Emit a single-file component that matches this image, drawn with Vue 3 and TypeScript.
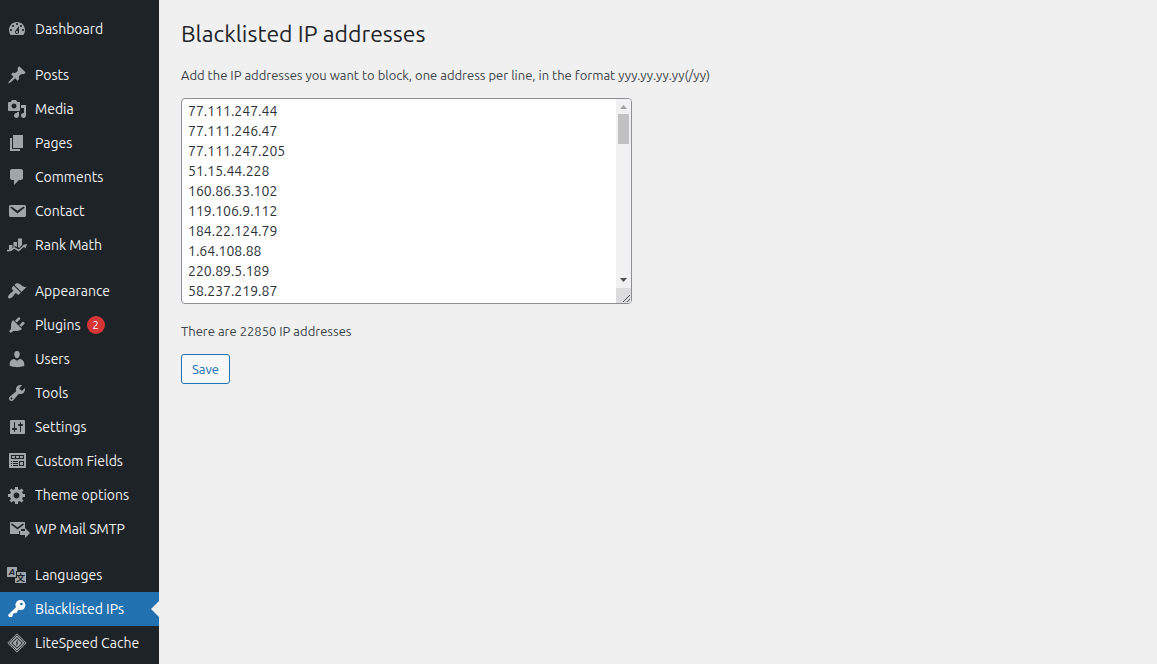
<script setup lang="ts">
import { ref } from 'vue'

interface MenuItem {
  label: string
  icon: string
  badge?: number
  active?: boolean
}

const groups: MenuItem[][] = [
  [{ label: 'Dashboard', icon: 'dashboard' }],
  [
    { label: 'Posts', icon: 'post' },
    { label: 'Media', icon: 'media' },
    { label: 'Pages', icon: 'page' },
    { label: 'Comments', icon: 'comments' },
    { label: 'Contact', icon: 'email' },
    { label: 'Rank Math', icon: 'rank' },
  ],
  [
    { label: 'Appearance', icon: 'appearance' },
    { label: 'Plugins', icon: 'plugins', badge: 2 },
    { label: 'Users', icon: 'users' },
    { label: 'Tools', icon: 'tools' },
    { label: 'Settings', icon: 'settings' },
    { label: 'Custom Fields', icon: 'fields' },
    { label: 'Theme options', icon: 'generic' },
    { label: 'WP Mail SMTP', icon: 'smtp' },
  ],
  [
    { label: 'Languages', icon: 'languages' },
    { label: 'Blacklisted IPs', icon: 'key', active: true },
    { label: 'LiteSpeed Cache', icon: 'litespeed' },
  ],
]

const paths: Record<string, string> = {
  dashboard:
    'M3.76 16h12.48c1.1-1.37 1.76-3.11 1.76-5 0-4.42-3.58-8-8-8s-8 3.58-8 8c0 1.89.66 3.63 1.76 5zM10 4c.55 0 1 .45 1 1s-.45 1-1 1-1-.45-1-1 .45-1 1-1zM6 6c.55 0 1 .45 1 1s-.45 1-1 1-1-.45-1-1 .45-1 1-1zm8 0c.55 0 1 .45 1 1s-.45 1-1 1-1-.45-1-1 .45-1 1-1zm-5.37 5.55L12 7v6c0 1.1-.9 2-2 2s-2-.9-2-2c0-.57.24-1.08.63-1.45zM4 10c.55 0 1 .45 1 1s-.45 1-1 1-1-.45-1-1 .45-1 1-1zm12 0c.55 0 1 .45 1 1s-.45 1-1 1-1-.45-1-1 .45-1 1-1zm-5 3c0-.55-.45-1-1-1s-1 .45-1 1 .45 1 1 1 1-.45 1-1z',
  post:
    'M10.44 3.02l1.82-1.82 6.36 6.35-1.83 1.82c-1.05-.68-2.48-.57-3.41.36l-.75.75c-.92.93-1.04 2.35-.35 3.41l-1.83 1.82-2.41-2.41-2.8 2.79c-.42.42-3.38 2.71-3.8 2.29s1.86-3.39 2.28-3.81l2.79-2.79L4.1 9.36l1.83-1.82c1.05.69 2.48.57 3.4-.36l.75-.75c.93-.92 1.05-2.35.36-3.41z',
  media:
    'M13 11V4c0-.55-.45-1-1-1h-1.67L9 1H5L3.67 3H2c-.55 0-1 .45-1 1v7c0 .55.45 1 1 1h10c.55 0 1-.45 1-1zM7 4.5c1.38 0 2.5 1.12 2.5 2.5S8.38 9.5 7 9.5 4.5 8.38 4.5 7 5.62 4.5 7 4.5zM14 6h5v10.5c0 1.38-1.12 2.5-2.5 2.5S14 17.88 14 16.5s1.12-2.5 2.5-2.5c.17 0 .34.02.5.05V9h-3V6zm-4 8.05V13h2v3.5c0 1.38-1.12 2.5-2.5 2.5S7 17.88 7 16.5 8.12 14 9.5 14c.17 0 .34.02.5.05z',
  page: 'M6 15V2h10v13H6zm-1 1h8v2H3V5h2v11z',
  comments: 'M5 2h9c1.1 0 2 .9 2 2v7c0 1.1-.9 2-2 2h-2l-5 5v-5H5c-1.1 0-2-.9-2-2V4c0-1.1.9-2 2-2z',
  email:
    'M3.87 4h13.25C18.37 4 19 4.59 19 5.79v8.42c0 1.19-.63 1.79-1.88 1.79H3.87c-1.25 0-1.88-.6-1.88-1.79V5.79c0-1.2.63-1.79 1.88-1.79zm6.62 8.6l6.74-5.53c.24-.2.43-.66.13-1.07-.29-.41-.82-.42-1.17-.17l-5.7 3.86L4.8 5.83c-.35-.25-.88-.24-1.17.17-.3.41-.11.87.13 1.07z',
  appearance:
    'M14.48 11.06L7.41 3.99l1.5-1.5c.5-.56 2.3-.47 3.51.32 1.21.8 1.43 1.28 2.91 2.1 1.18.64 2.45 1.26 4.45.85zm-.71.71L6.7 4.7 4.93 6.47c-.39.39-.39 1.02 0 1.41l1.06 1.06c.39.39.39 1.03 0 1.42-.6.6-1.43 1.11-2.21 1.69-.35.26-.7.53-1.01.84C1.43 14.23.4 16.08 1.4 17.07c.99 1 2.84-.03 4.18-1.36.31-.31.58-.66.85-1.02.57-.78 1.08-1.61 1.69-2.21.39-.39 1.02-.39 1.41 0l1.06 1.06c.39.39 1.02.39 1.41 0z',
  plugins:
    'M13.11 4.36L9.87 7.6 8 5.73l3.24-3.24c.35-.34 1.05-.2 1.56.32.52.51.66 1.21.31 1.55zm-8 1.77l.91-1.12 9.01 9.01-1.19.84c-.71.71-2.63 1.16-3.82 1.16H6.14L4.9 17.26c-.59.59-1.54.59-2.12 0-.59-.58-.59-1.53 0-2.12l1.24-1.24v-3.88c0-1.13.4-3.19 1.09-3.89zm7.26 3.97l3.24-3.24c.34-.35 1.04-.21 1.55.31.52.51.66 1.21.31 1.55l-3.24 3.25z',
  users:
    'M10 9.25c-2.27 0-2.73-3.44-2.73-3.44C7 4.02 7.82 2 9.97 2c2.16 0 2.98 2.02 2.71 3.81 0 0-.41 3.44-2.68 3.44zm0 2.57L12.72 10c2.39 0 4.52 2.33 4.52 4.53v2.49s-3.65 1.13-7.24 1.13c-3.65 0-7.24-1.13-7.24-1.13v-2.49c0-2.25 1.94-4.48 4.47-4.48z',
  tools:
    'M16.68 9.77c-1.34 1.34-3.3 1.67-4.95.99l-5.41 6.52c-.99.99-2.59.99-3.58 0s-.99-2.59 0-3.57l6.52-5.42c-.68-1.65-.35-3.61.99-4.95 1.28-1.28 3.12-1.62 4.72-1.06l-2.89 2.89 2.82 2.82 2.86-2.87c.53 1.58.18 3.39-1.08 4.65zM3.81 16.21c.4.39 1.04.39 1.43 0 .4-.4.4-1.04 0-1.43-.39-.4-1.03-.4-1.43 0-.39.39-.39 1.03 0 1.43z',
  settings:
    'M18 16V4c0-.55-.45-1-1-1H4c-.55 0-1 .45-1 1v12c0 .55.45 1 1 1h13c.55 0 1-.45 1-1zM8 11h1c.55 0 1 .45 1 1s-.45 1-1 1H8v1.5c0 .28-.22.5-.5.5s-.5-.22-.5-.5V13H6c-.55 0-1-.45-1-1s.45-1 1-1h1V5.5c0-.28.22-.5.5-.5s.5.22.5.5V11zm5-2h-1c-.55 0-1-.45-1-1s.45-1 1-1h1V5.5c0-.28.22-.5.5-.5s.5.22.5.5V7h1c.55 0 1 .45 1 1s-.45 1-1 1h-1v5.5c0 .28-.22.5-.5.5s-.5-.22-.5-.5V9z',
  fields:
    'M3 2h15c.55 0 1 .45 1 1v13c0 .55-.45 1-1 1H3c-.55 0-1-.45-1-1V3c0-.55.45-1 1-1zM4 4v4h13V4zM5 5h3v2H5zM9 5h3v2H9zM13 5h3v2h-3zM4 10v1h1v-1zM6 10v1h5v-1zM4 12v1h1v-1zM6 12v1h5v-1zM4 14v1h1v-1zM6 14v1h5v-1zM12 10v5h5v-5zM13 11h3v3h-3z',
  generic:
    'M18 12h-2.18c-.17.7-.44 1.35-.81 1.93l1.54 1.54-2.1 2.1-1.54-1.54c-.58.36-1.23.63-1.91.79V19H8v-2.18c-.68-.16-1.33-.43-1.91-.79l-1.54 1.54-2.12-2.12 1.54-1.54c-.36-.58-.63-1.23-.79-1.91H1V9.03h2.17c.16-.7.44-1.35.8-1.94L2.43 5.55l2.1-2.1 1.54 1.54c.58-.37 1.24-.64 1.93-.81V2h3v2.18c.68.16 1.33.43 1.91.79l1.54-1.54 2.12 2.12-1.54 1.54c.36.59.64 1.24.8 1.94H18V12zm-8.5 1.5c1.66 0 3-1.34 3-3s-1.34-3-3-3-3 1.34-3 3 1.34 3 3 3z',
  key:
    'M16.95 2.58c1.96 1.95 1.96 5.12 0 7.07-1.51 1.51-3.75 1.84-5.59 1.01l-1.87 3.31-2.99.31L5 18H2l-1-2 7.95-7.69c-.92-1.87-.62-4.18.93-5.73 1.95-1.96 5.12-1.96 7.07 0zm-2.51 3.79c.74 0 1.33-.6 1.33-1.34 0-.73-.59-1.33-1.33-1.33-.73 0-1.33.6-1.33 1.33 0 .74.6 1.34 1.33 1.34z',
}

const addresses = ref<string>(
  [
    '77.111.247.44',
    '77.111.246.47',
    '77.111.247.205',
    '51.15.44.228',
    '160.86.33.102',
    '119.106.9.112',
    '184.22.124.79',
    '1.64.108.88',
    '220.89.5.189',
    '58.237.219.87',
  ].join('\n'),
)
const total = 22850
</script>

<template>
  <div class="admin">
    <nav class="sidebar" aria-label="Main menu">
      <ul v-for="(group, g) in groups" :key="g" class="group">
        <li v-for="item in group" :key="item.label">
          <a href="#" class="item" :class="{ active: item.active }">
            <svg class="icon" viewBox="0 0 20 20" aria-hidden="true">
              <g v-if="item.icon === 'rank'">
                <path d="M2 10h3.500v4L2 15zM6.500 7H10v5l-2-1-1.500 1.500zM11 3.500h4V10l-3 3-1-1z" />
                <path d="M0 15.500c3 .5 5-.5 7.300-2.600l4.200 2.600 6-5" fill="none" stroke="currentColor" stroke-width="1.600" />
                <path d="M15.500 10L20 9l-1.500 4.500z" />
              </g>
              <g v-else-if="item.icon === 'smtp'">
                <path d="M4 3h13c.7 0 1 .4 1 1v6h-4v2h-2v3H4c-.7 0-1-.4-1-1V4c0-.6.3-1 1-1z" />
                <path d="M4.500 4.800l6 4.700 6-4.700" fill="none" stroke="#1d2327" stroke-width="1.600" />
                <path d="M13 12h5V9l5 5-5 5v-3h-5z" />
              </g>
              <g v-else-if="item.icon === 'languages'">
                <path d="M1 2h8c.6 0 1 .4 1 1v3H9v6H1c-.6 0-1-.4-1-1V3c0-.6.4-1 1-1z" />
                <text class="cutout latin" x="5" y="10" text-anchor="middle">A</text>
                <path d="M10 7h8c.6 0 1 .4 1 1v9c0 .6-.4 1-1 1h-9c-.6 0-1-.4-1-1v-4h2z" />
                <text class="cutout han" x="13.500" y="16" text-anchor="middle">文</text>
              </g>
              <g v-else-if="item.icon === 'litespeed'" fill="none" stroke="currentColor">
                <path d="M10 .8l9.200 9.200-9.200 9.200L.8 10z" />
                <path d="M10 3.200l6.800 6.800-6.800 6.800L3.200 10z" stroke-width="1.400" />
                <path d="M10 5.800l4.200 4.200-4.200 4.200L5.800 10z" fill="currentColor" />
                <path d="M10.500 7.500l-1 2.500h1l-1 2.500" stroke="#1d2327" />
              </g>
              <path v-else :d="paths[item.icon]" fill-rule="evenodd" />
            </svg>
            <span>{{ item.label }}</span>
            <span v-if="item.badge" class="badge">{{ item.badge }}</span>
          </a>
        </li>
      </ul>
    </nav>

    <main class="content">
      <h1>Blacklisted IP addresses</h1>
      <form @submit.prevent>
        <label for="ips">
          Add the IP addresses you want to block, one address per line, in the format yyy.yy.yy.yy(/yy)
        </label>
        <div class="field">
          <textarea id="ips" v-model="addresses" rows="10" spellcheck="false"></textarea>
          <div class="scrollbar" aria-hidden="true">
            <svg class="arrow up" viewBox="0 0 15 15"><path d="M4 10h7L7.500 6z" /></svg>
            <span class="thumb"></span>
            <svg class="arrow down" viewBox="0 0 15 15"><path d="M4 5h7l-3.500 4z" /></svg>
            <svg class="grip" viewBox="0 0 15 15"><path d="M7 14l7-7M11 14l3-3" /></svg>
          </div>
        </div>
        <p>There are {{ total }} IP addresses</p>
        <button type="submit">Save</button>
      </form>
    </main>
  </div>
</template>

<style>
body {
  background: #f0f0f0;
}
</style>

<style scoped>
.admin {
  display: flex;
  min-height: 100vh;
  box-sizing: border-box;
  font-family: Ubuntu, "Noto Sans", "Open Sans", sans-serif;
  font-size: 13px;
  line-height: 20px;
  color: #3c434a;
}

.sidebar {
  flex: none;
  display: flex;
  flex-direction: column;
  gap: 12px;
  width: 159px;
  box-sizing: border-box;
  padding-top: 12px;
  background: #1d2327;
}

.group {
  margin: 0;
  padding: 0;
  list-style: none;
}

.item {
  position: relative;
  display: flex;
  align-items: center;
  height: 34px;
  padding-left: 7px;
  font-size: 14px;
  white-space: nowrap;
  text-decoration: none;
  color: #f0f0f1;
}

.icon {
  flex: none;
  width: 20px;
  height: 20px;
  margin-right: 8px;
  overflow: visible;
  color: #a0a5aa;
  fill: currentColor;
}

.cutout {
  font-size: 9px;
  font-weight: 700;
  fill: #1d2327;
}

.latin {
  font-style: italic;
}

.han {
  font-family: "Noto Sans CJK SC", sans-serif;
}

.active {
  background: #2271b1;
  color: #fff;
}

.active .icon {
  color: #fff;
}

.active::after {
  content: "";
  position: absolute;
  top: 9px;
  right: 0;
  border: 8px solid transparent;
  border-left-width: 0;
  border-right-color: #f0f0f0;
}

.badge {
  width: 18px;
  height: 18px;
  margin-left: 6px;
  border-radius: 9px;
  background: #d63638;
  color: #fff;
  font-size: 11px;
  line-height: 18px;
  text-align: center;
}

.content {
  flex: 1;
  min-width: 0;
  padding: 19px 22px;
}

h1 {
  margin: 0 0 16px;
  font-size: 23px;
  font-weight: 400;
  line-height: 30px;
  color: #1d2327;
}

label {
  display: block;
  margin-bottom: 13px;
}

.field {
  position: relative;
  width: 451px;
  max-width: 100%;
}

textarea {
  display: block;
  width: 100%;
  box-sizing: border-box;
  margin: 0;
  padding: 2px 22px 2px 6px;
  border: 1px solid #8c8f94;
  border-radius: 4px;
  background: #fff;
  color: #2c3338;
  font-family: inherit;
  font-size: 14px;
  line-height: 20px;
  resize: none;
  overflow: hidden;
}

.scrollbar {
  position: absolute;
  top: 1px;
  right: 1px;
  bottom: 1px;
  display: flex;
  flex-direction: column;
  align-items: center;
  width: 15px;
  border-radius: 0 3px 3px 0;
  background: #f1f1f1;
  overflow: hidden;
}

.arrow {
  width: 15px;
  height: 15px;
}

.up {
  fill: #a3a3a3;
}

.down {
  margin-top: auto;
  fill: #505050;
}

.thumb {
  width: 11px;
  height: 30px;
  background: #c1c1c1;
}

.grip {
  width: 15px;
  height: 15px;
  background: #dcdcdc;
  fill: none;
  stroke: #505050;
}

p {
  margin: 17px 0 13px;
}

button {
  height: 30px;
  padding: 0 10px;
  border: 1px solid #2271b1;
  border-radius: 3px;
  background: #f6f7f7;
  color: #2271b1;
  font-family: inherit;
  font-size: 13px;
  line-height: 28px;
}
</style>
